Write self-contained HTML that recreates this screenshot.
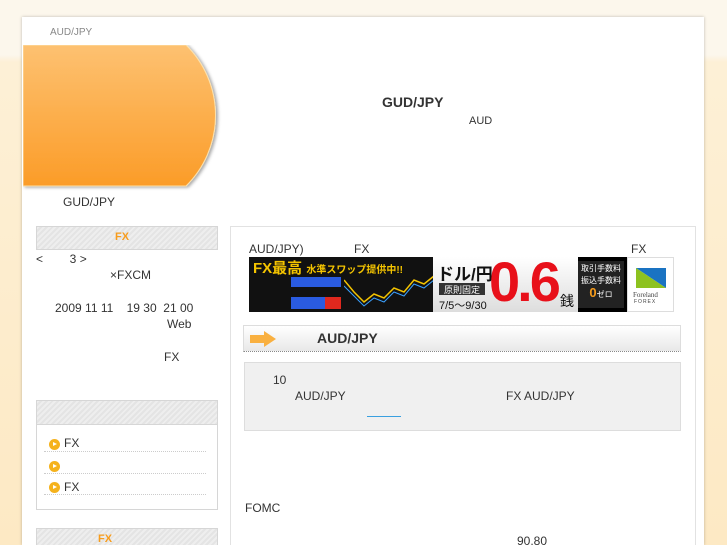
<!DOCTYPE html>
<html><head><meta charset="utf-8">
<style>
*{margin:0;padding:0;box-sizing:border-box}
html,body{width:727px;height:545px;overflow:hidden}
body{position:relative;font-family:"Liberation Sans","Noto Sans CJK JP",sans-serif;font-size:12px;color:#333;
background:linear-gradient(to bottom,#fcf7ec 0,#fcf7ec 55px,#fdf0d6 62px,#fde9c4 545px);}
.a{position:absolute;white-space:nowrap}
#wrap{position:absolute;left:22px;top:17px;width:682px;height:528px;background:#fff;box-shadow:0 0 3px rgba(0,0,0,.25)}
.hd{background:repeating-linear-gradient(135deg,#eee 0,#eee 2px,#e4e4e4 2px,#e4e4e4 4px);border:1px solid #d6d6d6}
.dot{position:absolute;width:11px;height:11px;border-radius:50%;background:#f5b21c}
.dot:after{content:"";position:absolute;left:4px;top:3px;border-left:4px solid #fff;border-top:2.5px solid transparent;border-bottom:2.5px solid transparent}
.ul{position:absolute;left:44px;width:162px;border-top:1px dotted #ccc}
.t{font-size:12px}
</style></head><body>
<div id="wrap"></div>
<div class="a" style="left:50px;top:27px;font-size:10px;color:#888">AUD/JPY</div>
<svg class="a" style="left:23px;top:45px" width="200" height="146">
<defs><linearGradient id="g" x1="0" y1="0" x2="0" y2="1"><stop offset="0" stop-color="#fdc171"/><stop offset="1" stop-color="#fb9c28"/></linearGradient>
<filter id="s"><feDropShadow dx="2" dy="1" stdDeviation="1.5" flood-opacity=".35"/></filter></defs>
<path d="M0,0 H163 A99,99 0 0 1 163,141 H0 Z" fill="url(#g)" stroke="#fde0a8" stroke-width="1" filter="url(#s)"/>
</svg>
<div class="a" style="left:382px;top:94px;font-size:14px;font-weight:bold">GUD/JPY</div>
<div class="a" style="left:469px;top:115px;font-size:11px">AUD</div>
<div class="a t" style="left:63px;top:195px">GUD/JPY</div>

<div class="a hd" style="left:36px;top:226px;width:182px;height:24px"></div>
<div class="a" style="left:115px;top:231px;font-size:11px;color:#f79c1c;font-weight:bold">FX</div>
<div class="a t" style="left:36px;top:252px">&lt;&nbsp;&nbsp;&nbsp;&nbsp;&nbsp;&nbsp;&nbsp;&nbsp;3 &gt;</div>
<div class="a t" style="left:110px;top:268px">×FXCM</div>
<div class="a t" style="left:55px;top:301px">2009 11 11&nbsp;&nbsp;&nbsp;&nbsp;19 30&nbsp;&nbsp;21 00</div>
<div class="a t" style="left:167px;top:317px">Web</div>
<div class="a t" style="left:164px;top:350px">FX</div>

<div class="a" style="left:36px;top:400px;width:182px;height:110px;border:1px solid #d6d6d6"></div>
<div class="a hd" style="left:36px;top:400px;width:182px;height:25px"></div>
<div class="dot" style="left:49px;top:439px"></div><div class="a t" style="left:64px;top:436px">FX</div><div class="ul" style="top:451px"></div>
<div class="dot" style="left:49px;top:461px"></div><div class="ul" style="top:473px"></div>
<div class="dot" style="left:49px;top:482px"></div><div class="a t" style="left:64px;top:480px">FX</div><div class="ul" style="top:494px"></div>
<div class="a hd" style="left:36px;top:528px;width:182px;height:30px"></div>
<div class="a" style="left:98px;top:533px;font-size:11px;color:#f79c1c;font-weight:bold">FX</div>

<div class="a" style="left:230px;top:226px;width:466px;height:330px;border:1px solid #e2e2e2"></div>
<div class="a t" style="left:249px;top:242px">AUD/JPY)</div>
<div class="a t" style="left:354px;top:242px">FX</div>
<div class="a t" style="left:631px;top:242px">FX</div>
<div class="a" style="left:249px;top:257px;width:378px;height:55px;background:#000;overflow:hidden">
 <div class="a" style="left:0;top:0;width:184px;height:55px;background:#111"></div>
 <div class="a" style="left:4px;top:0;font-size:15px;color:#f4c400;font-weight:bold">FX最高 <span style="font-size:10px">水準スワップ提供中!!</span></div>
 <div class="a" style="left:42px;top:20px;width:50px;height:10px;background:#2a5be0"></div>
 <div class="a" style="left:42px;top:40px;width:34px;height:12px;background:#2a5be0"></div>
 <div class="a" style="left:76px;top:40px;width:16px;height:12px;background:#e0281e"></div>
 <svg class="a" style="left:95px;top:15px" width="90" height="40"><polyline points="0,8 10,20 20,30 30,22 40,26 50,16 60,20 70,8 80,12 90,4" fill="none" stroke="#f4c400" stroke-width="1.5"/><polyline points="0,14 10,24 20,34 30,26 40,30 50,20 60,24 70,12 80,16 90,8" fill="none" stroke="#3aa0ff" stroke-width="1"/></svg>
 <div class="a" style="left:184px;top:0;width:145px;height:55px;background:linear-gradient(#fff,#ddd)"></div>
 <div class="a" style="left:188px;top:3px;font-size:17px;font-weight:bold;color:#111">ドル/円</div>
 <div class="a" style="left:190px;top:26px;width:46px;height:12px;background:#333;color:#fff;font-size:9px;text-align:center">原則固定</div>
 <div class="a" style="left:190px;top:40px;font-size:11px;color:#111">7/5〜9/30</div>
 <div class="a" style="left:240px;top:-8px;font-size:56px;font-weight:bold;color:#e8101a;letter-spacing:-3px">0.6</div>
 <div class="a" style="left:311px;top:34px;font-size:14px;color:#111">銭</div>
 <div class="a" style="left:329px;top:4px;width:46px;height:47px;background:#222;color:#fff;font-size:8px;text-align:center;line-height:12px;padding-top:2px">取引手数料<br>振込手数料<br><span style="color:#f79c1c;font-size:13px;font-weight:bold">0</span>ゼロ</div>
</div>
<div class="a" style="left:627px;top:257px;width:47px;height:55px;border:1px solid #ddd;background:#fff"></div>
<svg class="a" style="left:636px;top:268px" width="30" height="20"><polygon points="0,0 30,0 30,20" fill="#1a73c2"/><polygon points="0,0 0,20 30,20" fill="#8dc21f"/></svg>
<div class="a" style="left:633px;top:291px;font-size:7px;color:#444;font-family:'Liberation Serif',serif">Foreland</div>
<div class="a" style="left:634px;top:299px;font-size:5px;color:#444;letter-spacing:1px">FOREX</div>

<div class="a" style="left:243px;top:325px;width:438px;height:27px;background:linear-gradient(#fff,#e8e8e8);border:1px solid #ddd;border-bottom:1px dotted #888"></div>
<svg class="a" style="left:250px;top:331px" width="26" height="16"><path d="M0,4 H14 V0 L26,8 L14,16 V12 H0 Z" fill="#f9b040"/></svg>
<div class="a" style="left:317px;top:330px;font-size:14px;font-weight:bold">AUD/JPY</div>
<div class="a" style="left:244px;top:362px;width:437px;height:69px;background:#f0f0f0;border:1px solid #ddd"></div>
<div class="a t" style="left:273px;top:373px">10</div>
<div class="a t" style="left:295px;top:389px">AUD/JPY</div>
<div class="a t" style="left:506px;top:389px">FX AUD/JPY</div>
<div class="a" style="left:367px;top:416px;width:34px;border-top:1px solid #3aa0e0"></div>
<div class="a t" style="left:245px;top:501px">FOMC</div>
<div class="a t" style="left:517px;top:534px">90.80</div>
</body></html>
